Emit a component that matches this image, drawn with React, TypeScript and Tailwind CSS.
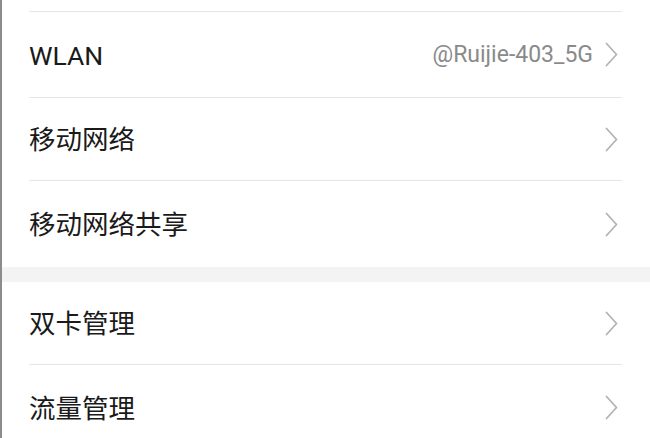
const font = { fontFamily: 'Roboto, "Noto Sans CJK SC", sans-serif' };

type Row = { label: string; value?: string; h: string; divider: boolean };

const group1: Row[] = [
  { label: 'WLAN', value: '@Ruijie-403_5G', h: 'h-[86px]', divider: true },
  { label: '移动网络', h: 'h-[83px]', divider: true },
  { label: '移动网络共享', h: 'h-[86px]', divider: false },
];

const group2: Row[] = [
  { label: '双卡管理', h: 'h-[83px]', divider: true },
  { label: '流量管理', h: 'h-[85px]', divider: false },
];

function Chevron() {
  return (
    <svg width="13" height="25" viewBox="0 0 13 25" className="mr-[4px]">
      <polyline
        points="1.5,1.5 11.5,12.5 1.5,23.5"
        fill="none"
        stroke="#b3b3b3"
        strokeWidth="1.8"
        strokeLinecap="round"
        strokeLinejoin="round"
      />
    </svg>
  );
}

function SettingRow({ row }: { row: Row }) {
  return (
    <div
      className={`ml-[27px] mr-[28px] flex items-center ${row.h} ${
        row.divider ? 'border-b border-[#e6e6e6]' : ''
      }`}
    >
      <span className="text-[26.5px] text-[#1a1a1a] leading-none pt-[3px]">{row.label}</span>
      <div className="ml-auto flex items-center">
        {row.value && (
          <span className="text-[23px] text-[#8a8a8a] leading-none mr-[12px]">{row.value}</span>
        )}
        <Chevron />
      </div>
    </div>
  );
}

export default function App() {
  return (
    <div
      className="w-[650px] h-[438px] overflow-hidden bg-white border-l-2 border-[#8c8c8c]"
      style={font}
    >
      <div className="h-[11px]" />
      <div className="ml-[27px] mr-[28px] border-t border-[#e6e6e6]" />
      {group1.map((r) => (
        <SettingRow key={r.label} row={r} />
      ))}
      <div className="h-[15px] bg-[#f3f3f3]" />
      {group2.map((r) => (
        <SettingRow key={r.label} row={r} />
      ))}
    </div>
  );
}
